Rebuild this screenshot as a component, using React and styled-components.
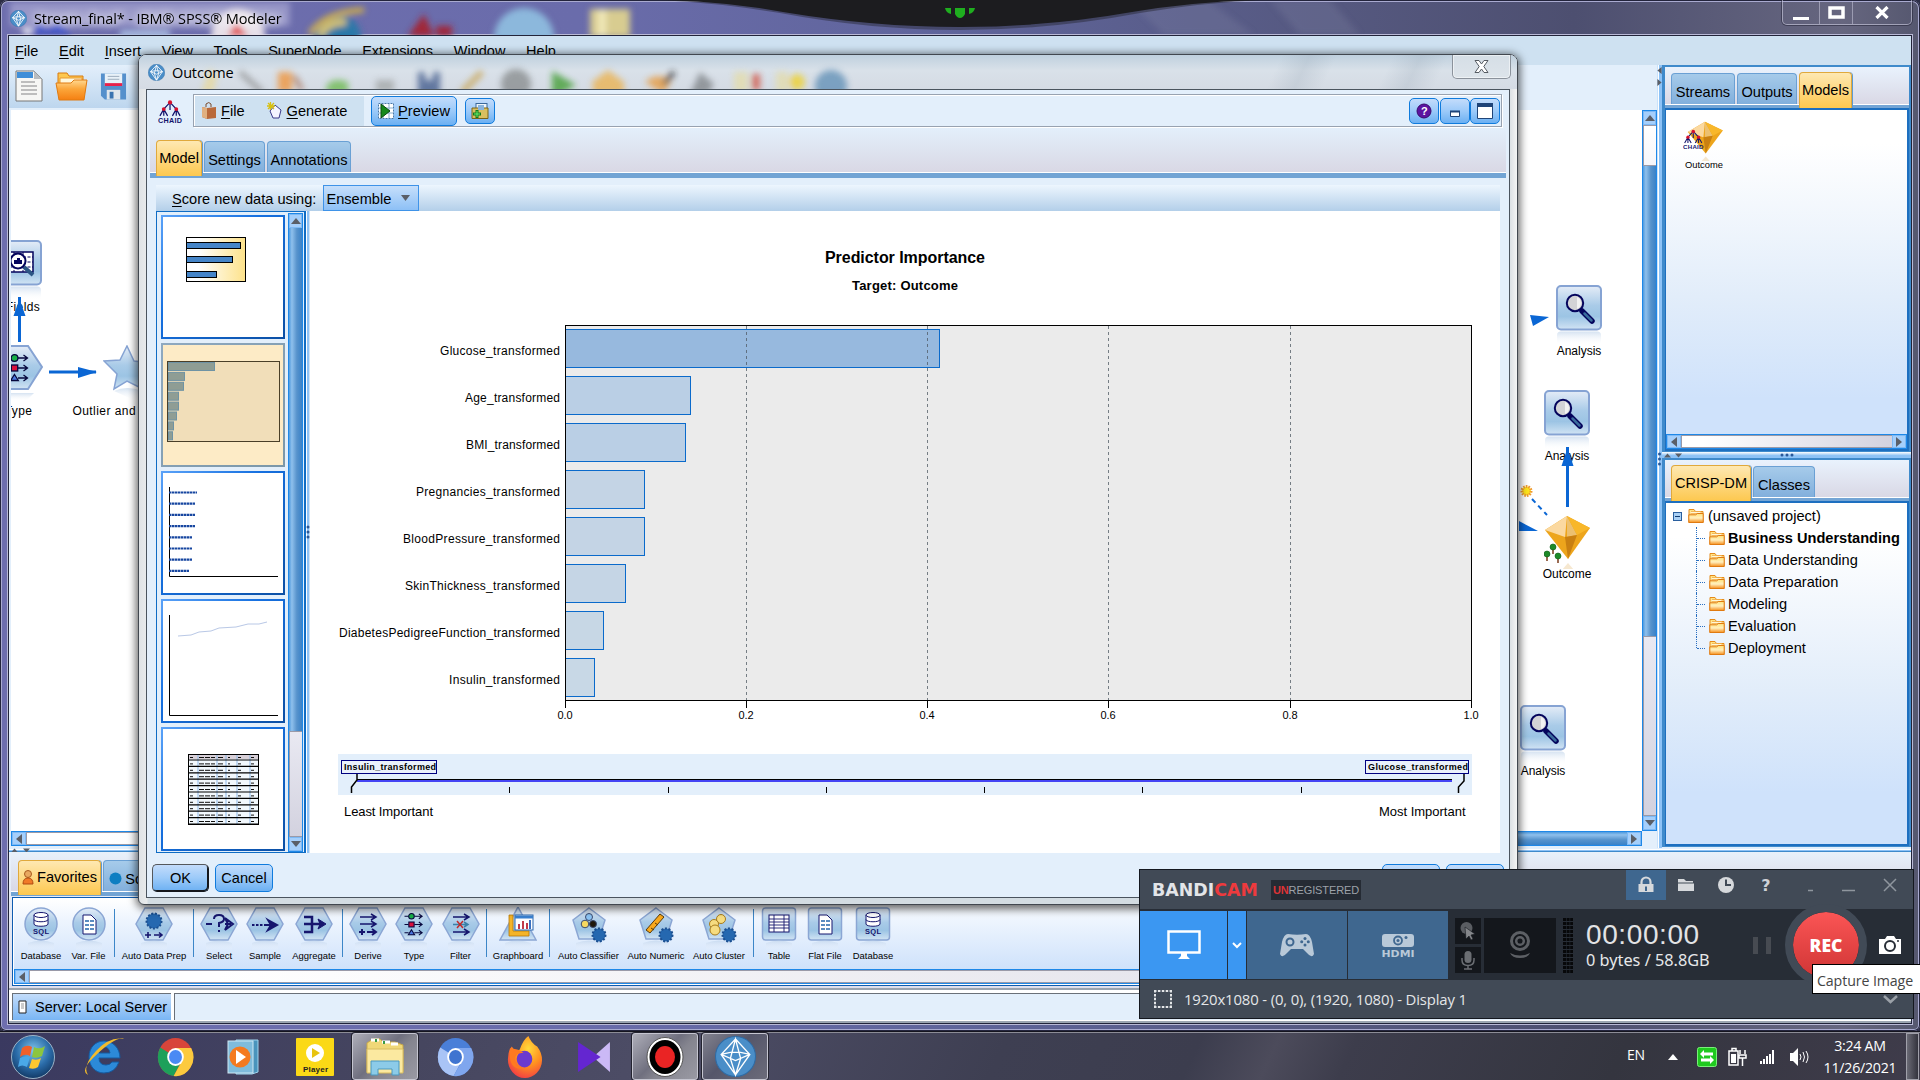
import React from "react";
import styled, { createGlobalStyle, css } from "styled-components";

const Global = createGlobalStyle`
  * { box-sizing: border-box; }
  body { margin: 0; overflow: hidden; background: #3b3c52; }
  svg { display: block; flex: none; }
`;

const ui = css`font-family: "Liberation Sans", Arial, sans-serif;`;
const segoe = css`font-family: "Open Sans", "Noto Sans", sans-serif;`;

const Desktop = styled.div`
  position: relative; width: 1920px; height: 1080px; overflow: hidden;
  display: flex; flex-direction: column; background: #2c2d45; color: #000;
  ${ui} font-size: 14.6px; white-space: nowrap;
`;

/* ---------- main window ---------- */
const MainWindow = styled.div`
  position: relative; isolation: isolate; height: 1031px; padding: 0 9px 8px; display: flex; flex-direction: column;
  border-radius: 8px 8px 6px 6px; box-shadow: inset 0 0 0 1px #23243c, inset 0 0 0 2px #a9aad0;
  background: linear-gradient(90deg, #6e6eae 0, #6a6cab 30%, #5f649a 50%, #55587f 70%, #4d4f70 82%, #66667f 96%, #55576f 100%);
`;
const TitleBar = styled.div`
  height: 36px; margin: 0 -9px; padding: 0 8px 0 10px; display: flex; align-items: flex-start; position: relative;
`;
const TitleArt = styled.svg`position: absolute; left: 0; top: 2px;`;
const TitleText = styled.div`
  position: relative; display: flex; align-items: center; gap: 7px; height: 36px; flex: 1;
  ${segoe} font-size: 14.5px; letter-spacing: -0.12px;
  span { text-shadow: 0 0 8px #fff, 0 0 12px rgba(255,255,255,.8), 0 0 16px rgba(255,255,255,.6); }
`;
const Caption = styled.div`
  position: relative; display: flex; height: 25px; width: 130px; padding-top: 1px; border: 1px solid rgba(200,200,220,.65); border-top: 0;
  border-radius: 0 0 5px 5px; box-shadow: 0 0 0 1px rgba(30,30,50,.5);
`;
const CaptionBtn = styled.div`
  width: ${p => p.$w}px; display: flex; align-items: center; justify-content: center;
  & + & { border-left: 1px solid rgba(200,200,220,.55); }
`;
const Client = styled.div`
  flex: 1; display: flex; flex-direction: column; background: #e3effb; box-shadow: 0 0 0 1px #22243a, 0 0 0 2px #b9b9d6; min-height: 0;
`;
const MenuBar = styled.div`
  height: 29px; background: #cee1f1; padding-left: 6px; display: flex; align-items: center; gap: 20.7px; font-size: 14.5px;
`;
const U = styled.span`text-decoration: underline; text-underline-offset: 2px;`;
const Body = styled.div`height: 783px; display: flex;`;
const StreamArea = styled.div`width: 1648px; display: flex; flex-direction: column;`;
const Toolbar = styled.div`
  height: 43px; display: flex; align-items: center; gap: 12px; padding: 0 0 1px 6px;
  background: linear-gradient(90deg, transparent 10%, #e3effb 60%), linear-gradient(#e3effb, #bdd6ee);
`;
const CanvasRow = styled.div`display: flex; height: 721px; margin: 2px 0 0 2px;`;
const Canvas = styled.div`position: relative; flex: 1; background: #fff; overflow: hidden;`;
const Links = styled.svg`position: absolute; left: 0; top: 0;`;
const Node = styled.div`
  position: absolute; left: ${p => p.$x - 61}px; top: ${p => p.$y - 110}px; width: 100px;
  display: flex; flex-direction: column; align-items: center; font-size: 12px; line-height: 14px;
`;
const NodeLabel = styled.div`margin-top: ${p => p.$m || -3}px; letter-spacing: ${p => p.$ls || 0}px; padding-left: ${p => p.$pl || 0}px;`;

const VBar = styled.div`width: 15px; display: flex; flex-direction: column; border: 1px solid #1e88e8; background: #fff;`;
const HBar = styled.div`height: ${p => p.$h || 15}px; display: flex; flex: none; border: 1px solid #1e88e8; background: #fff; margin: 0 ${p => p.$mr || 0}px 0 ${p => p.$ml || 0}px;`;
const Arrow = styled.div`
  width: ${p => (p.$h ? 14 : 13)}px; height: ${p => (p.$h ? "100%" : "14px")}; background: #a5cffb; flex: none;
  box-shadow: inset 0 0 0 1px #7db9f5; display: flex; align-items: center; justify-content: center;
`;
const Thumb = styled.div`
  flex: ${p => p.$f};
  background: linear-gradient(${p => (p.$h ? "180deg" : "90deg")}, #4f9ade, #8fc0ec 22%, #5793cc 60%, #3a82c8);
`;
const Track = styled.div`
  flex: ${p => p.$f}; border: 1px solid #9a9aa8; border-right: 0;
  background: linear-gradient(${p => (p.$white ? "180deg,#fff,#f6f6fa" : p.$v ? "180deg,#e9e9f2,#d3d2df" : "90deg,#fff 0,#fff 10%,#d3d2df")});
`;

const VSplit = styled.div`
  width: 5px; background: linear-gradient(90deg, #c9e2fb 0 1px, #fff 1px 2px, #8dc2f6 2px 5px);
  display: flex; flex-direction: column; align-items: center; padding-top: 2px;
`;
const Side = styled.div`width: 249px; display: flex; flex-direction: column;`;
const SidePanel = styled.div`
  height: ${p => p.$h}px; border: 3px solid #3f8acb; border-width: 2px 2px 1px 3px;
  background: #74a5d5; display: flex; flex-direction: column;
`;
const SideSplit = styled.div`height: 6px; background: linear-gradient(#fff, #8dc2f6 60%); display: flex; align-items: center; gap: 4px; padding-left: 2px;`;
const Strip = styled.div`
  height: ${p => p.$h}px; display: flex; align-items: flex-end; gap: 2px; padding-left: ${p => p.$pl}px; flex: none;
  background: linear-gradient(${p => p.$from || "#e9f2fd"}, #d9d8e5); border-bottom: 1px solid #fff;
`;
const Tab = styled.div`
  width: ${p => p.$w}px; height: ${p => p.$h || 31}px; flex: none; display: flex; align-items: center; justify-content: center; gap: 3px;
  padding-top: 5px; border: 1px solid #6aa0d4; border-bottom: 0; border-radius: 4px 4px 0 0;
  background: linear-gradient(#a6cbea, #82afdc); position: relative; z-index: 1;
  ${p => p.$on && css`background: linear-gradient(#fee8b2, #fdc84f); border-color: #e0a93c; margin-bottom: -4px; padding: 0 0 2px; box-shadow: 1px 0 0 #5c9bd4;`}
`;
const SideBody = styled.div`
  flex: 1; margin-top: 3px; border: 2px solid #1d6fc0; border-left-width: 1px; display: flex; flex-direction: column; min-height: 0;
  background: linear-gradient(#fff 10%, #e2edfa 55%, #cfe2fb 85%);
`;
const ModelItem = styled.div`
  flex: 1; padding: 11px 0 0 17px; display: flex; flex-direction: column; align-items: flex-start; font-size: 9.35px;
  div { width: 42px; text-align: center; margin-top: -1px; }
`;
const Tree = styled.div`flex: 1; padding-top: 2px; font-size: 14.6px;`;
const TreeRow = styled.div`
  height: 22px; display: flex; align-items: center; gap: ${p => (p.$root ? 4 : 3.5)}px; padding-left: ${p => (p.$root ? 7 : 30)}px;
  font-weight: ${p => (p.$bold ? 700 : 400)};
`;
const Guide = styled.div`width: 9px; height: 22px; border-left: 1px dotted #2a6fc0; display: flex; align-items: center; ${p => p.$last && "height: 11px; align-self: flex-start;"}
  &::after { content: ""; width: 9px; border-top: 1px dotted #2a6fc0; ${p => p.$last && "margin-top: 11px;"} }`;
const Expander = styled.div`
  width: 9px; height: 9px; margin-right: 2px; border: 1px solid #2a5f9e; background: #a9d0f5; display: flex; align-items: center; justify-content: center;
  &::after { content: ""; width: 5px; height: 1px; background: #103a70; }
`;

const HSplit = styled.div`height: 4px; background: linear-gradient(#e3f0fd 0 1px, #fff 1px 2px, #8dc2f6 2px 3px, #3f8acb 3px 4px); display: flex; gap: 5px; padding-left: 2px; align-items: center;`;
const Lower = styled.div`height: 136px; background: linear-gradient(#e8f1fb, #dedfec); padding-left: 2px; display: flex; flex-direction: column;`;
const BlueBar = styled.div`height: ${p => p.$h}px; background: #72a4d4; flex: none;`;
const Palette = styled.div`
  height: 89px; margin: 1px 3px 0 1px; border: 1px solid #0f5cb0; padding: 1px; background: #fff; display: flex; flex-direction: column;
`;
const PaletteItems = styled.div`flex: 1; min-height: 0; display: flex; padding: 8px 0 0 3px; background: linear-gradient(#fff, #eef5fe 30%, #cfe2fb);`;
const PaletteItem = styled.div`
  width: ${p => p.$w}px; flex: none; display: flex; flex-direction: column; align-items: center; font-size: 9.45px; line-height: 11px;
  div { margin-top: -2px; }
`;
const Sep = styled.div`width: 1px; height: 48px; margin: 2px 2px 0; background: #3c86c8; flex: none;`;
const StatusBar = styled.div`flex: 1; display: flex; gap: 3px; padding: 3px 0 1px 3px; border-top: 2px solid #9aa4b0; border-bottom: 2px solid #9aa4b0; background: #fff;`;
const ServerBtn = styled.div`
  width: 159px; display: flex; align-items: center; gap: 8px; padding-left: 5px; border: 1px solid #6a7078; border-width: 1px 0 0 1px;
  background: linear-gradient(#c3dcfa, #79b5f4); font-size: 14.5px;
`;
const StatusRest = styled.div`flex: 1; background: #e3effb; border: 1px solid #6a7078; border-width: 1px 0 0 1px;`;

const TopTab = styled.svg`position: absolute; left: 660px; top: 0;`;

/* ---------- dialog ---------- */
const Dialog = styled.div`
  position: absolute; left: 138px; top: 54px; width: 1380px; height: 851px; border: 1px solid #41474f; border-radius: 8px 8px 6px 6px;
  padding: 0 7px 6px; display: flex; flex-direction: column; overflow: hidden;
  background: linear-gradient(90deg, #dfe3e6, #e9ebec 8px, transparent 9px, transparent calc(100% - 9px), #dfe3e6 calc(100% - 6px), #f4f4f4), #d3dce2;
`;
const DialogShadow = styled.div`
  position: absolute; left: 138px; top: 54px; width: 1380px; height: 851px; border-radius: 8px; box-shadow: 0 2px 9px 2px rgba(0,0,0,.6);
`;
const DlgTitle = styled.div`
  position: relative; height: 34px; margin: 0 -7px; padding: 0 6px 0 9px; display: flex; align-items: flex-start; flex: none;
  background: linear-gradient(115deg, transparent 82%, rgba(150,165,180,.25) 84%, transparent 86%, transparent 90%, rgba(150,165,180,.25) 92%, transparent 94%), linear-gradient(#bfd0de, #d9e1e9 45%, #d5dbe4);
`;
const DlgArt = styled.svg`position: absolute; left: 0; top: 0;`;
const DlgName = styled.div`position: relative; flex: 1; height: 34px; display: flex; align-items: center; gap: 7px; ${segoe} font-size: 14.5px; letter-spacing: -0.15px;`;
const DlgClose = styled.div`
  position: relative; width: 59px; height: 24px; border: 1px solid #8b929b; border-top: 0; border-radius: 0 0 5px 5px;
  background: linear-gradient(#d5dee6, #dde4ea); box-shadow: inset 0 0 0 1px rgba(255,255,255,.5); display: flex; align-items: center; justify-content: center;
`;
const DlgBody = styled.div`flex: 1; min-height: 0; border: 1px solid #4a545e; background: #e3effb; display: flex; flex-direction: column;`;
const DlgTools = styled.div`height: 38px; display: flex; align-items: flex-start; padding: 4px 7px 0 11px; gap: 10px; flex: none; & > svg { margin-top: 5px; }`;
const ToolFrame = styled.div`
  flex: 1; height: 33px; border: 1px solid #98a2b0; box-shadow: inset 1px 1px 0 #fff, 1px 1px 0 #fff; display: flex; align-items: center; padding: 1px 1px 0;
`;
const DlgMenu = styled.div`width: 169px; height: 30px; background: #cee1f1; display: flex; align-items: center; padding-left: 6px; gap: 4px; font-size: 14.6px; margin-right: 7px;`;
const Gap = styled.div`width: ${p => p.$w}px; flex: ${p => (p.$w ? "none" : 1)};`;
const Btn = styled.div`
  width: ${p => p.$w}px; height: ${p => p.$h}px; border: 1px solid ${p => (p.$dark ? "#14171c" : "#0f7bdd")}; border-radius: 5px; flex: none;
  display: flex; align-items: center; justify-content: center; gap: 4px; background: linear-gradient(#c3dcfb, #9ccaf9 50%, #6cb0f2);
  ${p => p.$dark && css`box-shadow: inset -1px -1px 0 #14171c; border-color: #55585c #14171c #14171c #55585c;`}
`;
const DlgTabs = styled.div`margin: 0 3px;`;
const ScoreBar = styled.div`
  height: 26px; margin: 7px 9px 0 9px; padding-left: 16px; display: flex; align-items: center; background: linear-gradient(#edf6fe, #b3cfe9); flex: none;
  span { padding-top: 1px; }
`;
const Select = styled.div`
  margin-left: 7px; width: 96px; height: 26px; border: 1px solid #3f93e8; background: linear-gradient(#c6dffb, #8dc0f6); display: flex; align-items: center; justify-content: space-between; padding: 0 8px 0 2px;
`;
const Work = styled.div`height: 642px; margin: 0 9px; display: flex; flex: none;`;
const ThumbPane = styled.div`width: 150px; border: 1px solid #0f6cc4; border-right-width: 2px; display: flex; justify-content: space-between; padding: 1px 1px 0 4px;`;
const ThumbList = styled.div`display: flex; flex-direction: column; gap: 4px; padding-top: 2px;`;
const ThumbCard = styled.div`
  width: 124px; height: 124px; padding: 2px; background: ${p => (p.$on ? "linear-gradient(135deg,#8fa9c0,#7b97a8)" : "linear-gradient(135deg,#5aa2f8,#1670e0 40%,#0b4fa4)")};
  svg { background: ${p => (p.$on ? "#fdebc6" : "#fff")}; }
`;
const PaneSplit = styled.div`width: 4px; background: linear-gradient(90deg, #fff 0 1px, #8dc2f6 1px 3px, #cfe2f6 3px); display: flex; flex-direction: column; justify-content: center;`;
const ChartArea = styled.div`flex: 1; background: #fff;`;
const DlgFooter = styled.div`flex: 1; display: flex; gap: 6px; padding: 11px 5px 0 5px;`;

/* ---------- recorder ---------- */
const Recorder = styled.div`
  position: absolute; left: 1139px; top: 869px; width: 775px; height: 150px; border: 1px solid #14181f; background: #414a56;
  display: flex; flex-direction: column; color: #e6e8ea;
`;
const RecHead = styled.div`height: 40px; flex: none; display: flex; align-items: flex-start; border-bottom: 1px solid #272d36; padding-left: 12px;`;
const Brand = styled.div`
  width: 119px; height: 40px; font: 700 17.4px/41px "DejaVu Sans", sans-serif; color: #e3e5e8;
  span { color: #ee3a3d; }
`;
const Unreg = styled.div`margin-top: 10px; width: 90px; height: 20px; background: #252b34; color: #9da2a9; font-size: 11px; line-height: 20px; text-align: center; letter-spacing: -0.1px;
  span { color: #dd3336; font-weight: 700; }`;
const HeadBtn = styled.div`width: 40px; height: 30px; display: flex; align-items: center; justify-content: center; background: ${p => (p.$on ? "#3f678f" : "none")}; font: 700 16px "DejaVu Sans", sans-serif; color: #cfd2d6;`;
const RecRow = styled.div`height: 70px; flex: none; background: #272d36; display: flex; align-items: center;`;
const Mode = styled.div`width: ${p => p.$w}px; height: 68px; margin-right: 1px; background: ${p => (p.$on ? "#3b97f2" : "#3f678f")}; display: flex; flex-direction: column; align-items: center; justify-content: center;`;
const SmallCol = styled.div`display: flex; flex-direction: column; gap: 3px; margin: 0 3px 0 6px;`;
const DarkBox = styled.div`width: ${p => p.$w}px; height: ${p => p.$h}px; background: #14171c; display: flex; align-items: center; justify-content: center;`;
const Timer = styled.div`width: 126px; margin-left: 13px; display: flex; flex-direction: column;`;
const Clock = styled.div`font: 400 28px/28px "Liberation Sans", sans-serif; letter-spacing: 0.6px; color: #e2e3e5;`;
const Bytes = styled.div`font-family: "Noto Sans", sans-serif; font-size: 16.3px; line-height: 20px; margin-top: 1px;`;
const RecBtn = styled.div`
  width: 82px; height: 82px; border: 8px solid #414a56; border-radius: 50%; background: linear-gradient(#fb5555, #cf3535); background-clip: padding-box;
  display: flex; align-items: center; justify-content: center; color: #fff; font: 800 17.5px "Open Sans", sans-serif; flex: none;
`;
const RecFoot = styled.div`flex: 1; display: flex; align-items: center; padding: 0 15px 0 14px; ${segoe} font-size: 14.9px; color: #e4e6e8; letter-spacing: -0.15px;`;
const Marquee = styled.svg`margin-right: 12px;`;
const Tip = styled.div`
  position: absolute; left: 1812px; top: 964px; width: 110px; height: 30px; border: 1px solid #000; background: #fff; color: #444;
  ${segoe} font-size: 14.2px; line-height: 31px; padding-left: 4px; letter-spacing: -0.1px;
`;

/* ---------- taskbar ---------- */
const Taskbar = styled.div`
  height: 49px; display: flex; align-items: stretch; border-top: 1px solid #15151f; box-shadow: inset 0 1px 0 #8c8c96; padding-top: 1px;
  background: linear-gradient(115deg, #3a3960 0, #46465f 22%, #4d4d66 35%, #3e3f52 52%, #3c3d4e 62%, #4c4b5b 66%, #3d3d4c 70%, #34353f 84%, #3f3c4b 100%);
`;
const Task = styled.div`
  width: ${p => p.$w || 70}px; display: flex; align-items: center; justify-content: center;
  ${p => p.$on && css`width: 66px; margin: 0 2px; border: 1px solid #c5c5d0; border-radius: 3px; background: linear-gradient(135deg, #aeaeb9, #70707f 45%, #85858f 60%, #9a9aa4); box-shadow: 0 0 0 1px #23232f;`}
  ${p => p.$dim && css`background: linear-gradient(135deg, #82828f, #55566a 45%, #6c6c7a);`}
`;
const Tray = styled.div`margin-left: auto; display: flex; align-items: center; color: #fff;`;
const Lang = styled.div`${segoe} font-size: 14px; width: 19px; padding-bottom: 4px; letter-spacing: -0.3px;`;
const DateBox = styled.div`width: 92px; text-align: center; ${segoe} line-height: 22px; font-size: 14.2px; letter-spacing: -0.25px;`;
const ShowDesk = styled.div`width: 13px; height: 47px; margin: 0 1px 0 0; border: 1px solid #a0a0aa; background: linear-gradient(90deg, #6a6a75, #33333d);`;

/* ---------- drawings ---------- */
const Defs = styled.svg`position: absolute; width: 0; height: 0;`;
const SharedDefs = () => (
  <Defs>
    <defs>
      <linearGradient id="node" x1="0" y1="0" x2="0" y2="1"><stop offset="0" stopColor="#e4ecf7" /><stop offset=".45" stopColor="#a9cbe8" /><stop offset=".7" stopColor="#9cc4e4" /><stop offset="1" stopColor="#d2e4f4" /></linearGradient>
      <linearGradient id="refl" x1="0" y1="0" x2="0" y2="1"><stop offset="0" stopColor="#b9cfe8" stopOpacity=".6" /><stop offset="1" stopColor="#fff" stopOpacity="0" /></linearGradient>
      <linearGradient id="fold" x1="0" y1="0" x2="0" y2="1"><stop offset="0" stopColor="#ffe27a" /><stop offset=".5" stopColor="#fff0c0" /><stop offset="1" stopColor="#f68f1c" /></linearGradient>
      <linearGradient id="foldFront" x1="0" y1="0" x2="0" y2="1"><stop offset="0" stopColor="#ffd890" /><stop offset=".45" stopColor="#fba63a" /><stop offset="1" stopColor="#f57f12" /></linearGradient>
      <linearGradient id="cream" x1="0" y1="0" x2="1" y2="0"><stop offset=".2" stopColor="#fff" /><stop offset="1" stopColor="#fde28a" /></linearGradient>
      <radialGradient id="orb" cx=".5" cy=".35" r=".65"><stop offset="0" stopColor="#7fc4ea" /><stop offset=".6" stopColor="#2a6ba8" /><stop offset="1" stopColor="#123a66" /></radialGradient>
      <radialGradient id="fox" cx=".6" cy=".3" r=".8"><stop offset="0" stopColor="#ffd93b" /><stop offset=".5" stopColor="#ff9020" /><stop offset="1" stopColor="#f0304a" /></radialGradient>
      <filter id="soft" x="-30%" y="-30%" width="160%" height="160%"><feGaussianBlur stdDeviation="3" /></filter>
    </defs>
  </Defs>
);

const Diamond = ({ s = 17 }) => (
  <svg width={s} height={s} viewBox="0 0 40 40"><circle cx="20" cy="20" r="19.5" fill="#4a8ec8" stroke="#2e6ba5" /><path d="M20 3 34 18 20 38 6 18ZM6 18 20 24 34 18M20 3 15 22 20 38 25 22ZM6 18 15 16 25 16 34 18" fill="none" stroke="#fff" strokeWidth={s > 25 ? 1.3 : 2} /></svg>
);
const Tri = ({ d, s = 10 }) => {
  const p = { up: "0,8 5,2 10,8", down: "0,2 5,8 10,2", left: "8,0 2,5 8,10", right: "2,0 8,5 2,10" }[d];
  return <svg width={s} height={s} viewBox="0 0 10 10"><polygon points={p} fill="#5a5f68" /></svg>;
};
const Folder = ({ w = 16, h = 16 }) => (
  <svg width={w} height={h} viewBox="0 0 16 16"><path d="M1 1.500h5l1.500 2H15v11H1Z" fill="url(#fold)" stroke="#e58a1a" /><path d="M3 3.500h10v2H2.500" fill="#fff7d8" stroke="#efa030" strokeWidth=".7" /><path d="M.8 6.800h7l1.400-1.300h6v9H.8Z" fill="url(#fold)" stroke="#e07a10" /></svg>
);
const Lens = () => (
  <g><path d="m26 26 10 10" stroke="#04045c" strokeWidth="5.5" strokeLinecap="round" /><path d="m28.500 28.500 7 7" stroke="#3a6c9c" strokeWidth="2.500" strokeLinecap="round" /><circle cx="19" cy="18" r="8.200" fill="#d3d3d6" stroke="#04045c" strokeWidth="2" /><path d="M21 12a6.500 6.500 0 0 1 0 12" fill="#f2f2f2" /></g>
);
const AnalysisIcon = () => (
  <svg width="46" height="62" viewBox="0 0 46 62"><rect x="1" y="1" width="44" height="43.500" rx="4" fill="url(#node)" stroke="#86a3d3" strokeWidth="2" /><path d="M1 60V50q0-3.500 4-3.500h36q4 0 4 3.500v10Z" fill="url(#refl)" /><Lens /></svg>
);
const FieldsIcon = () => (
  <svg width="46" height="62" viewBox="0 0 46 62"><rect x="1" y="1" width="44" height="43.500" rx="4" fill="url(#node)" stroke="#86a3d3" strokeWidth="2" /><path d="M1 60V50q0-3.500 4-3.500h36q4 0 4 3.500v10Z" fill="url(#refl)" /><rect x="9" y="12" width="28" height="20" fill="#fff" stroke="#04045c" strokeWidth="1.500" /><path d="M18 12v20M27 12v20M9 17h28M9 22h28M9 27h28" stroke="#04045c" strokeDasharray="3 1.500" /><circle cx="22" cy="21" r="7.500" fill="#fff" stroke="#04045c" strokeWidth="2" /><path d="M18 24h8v-4h-2v-2h-3v2h-3Z" fill="#04045c" /><path d="m28 27 9 8" stroke="#2c5684" strokeWidth="4" /></svg>
);
const TypeArrows = ({ x, y, s = 1 }) => (
  <g transform={`translate(${x} ${y}) scale(${s})`} stroke="#06063c" strokeWidth="1.300" fill="none"><path d="M0 4h5M12 4h9M17.500 1l4 3-4 3M0 14h5M12 14h9M17.500 11l4 3-4 3M0 24h5M12 24h9M17.500 21l4 3-4 3" /><circle cx="8.500" cy="4" r="3.400" fill="#18b048" /><rect x="5.300" y="11" width="6.400" height="6" fill="#d8103c" /><path d="m8.500 20.500 3.800 6H4.700Z" fill="#4a78e0" /></g>
);
const TypeIcon = () => (
  <svg width="60" height="58" viewBox="0 0 60 58"><path d="M14 1h30l14 21-14 22H14L2 22Z" fill="url(#node)" stroke="#86a3d3" strokeWidth="2" /><path d="M6 48h44l-8 8H14Z" fill="url(#refl)" /><TypeArrows x={22} y={9} /></svg>
);
const StarIcon = () => (
  <svg width="50" height="58" viewBox="0 0 50 58"><path d="m24 1 7 15 18 2-13 11 4 15-16-8-13 8 3-15L1 16l16-1Z" fill="url(#node)" stroke="#86a3d3" strokeWidth="1.500" /><path d="M11 46q13-6 28 0l-6 10Z" fill="url(#refl)" /></svg>
);
const Gem = () => (
  <g><path d="M23 1 46 13 24 44 1 15Z" fill="#eda51c" /><path d="M23 1 1 15l20 7Z" fill="#fbd9a0" /><path d="M23 1v21l10-2Z" fill="#ecc070" /><path d="m23 1 23 12-13 7Z" fill="#f8b72a" /><path d="m21 22 12-2-9 24Z" fill="#c98012" /><path d="m24 48 6 7H18Z" fill="#f0d8b0" opacity=".6" /></g>
);
const GemIcon = () => (
  <svg width="46" height="54" viewBox="0 0 46 54"><Gem />{[[9, 30], [3, 37], [14, 39]].map(([x, y], i) => <g key={i}><path d={`M${x} ${y}v9`} stroke="#7a3a18" strokeWidth="1.500" /><circle cx={x} cy={y + 2} r="3" fill="#1d8a28" stroke="#0c5a14" strokeWidth=".6" /></g>)}</svg>
);
const ChaidArt = () => (
  <g fill="none" stroke="#14146c" strokeWidth="1.300"><path d="M12.500 3 6 10 2 17M6 10v7M6 10l4 7M12.500 3 19 10l-4 7M19 10v7M19 10l4 7M12.500 3v8" /><g fill="#d8102c" stroke="none"><circle cx="12.500" cy="3" r="2.200" /><circle cx="6" cy="10" r="2" /><circle cx="19" cy="10" r="2" /></g><text x="0" y="24.500" fontSize="7.500" fontWeight="700" fill="#14146c" stroke="none" textLength="25" fontFamily="Liberation Sans">CHAID</text></g>
);

const P = { circle: <circle cx="19" cy="17" r="16" />, hex: <path d="M10 1h18l9 16-9 16H10L1 17Z" />, penta: <path d="m19 1 16 12-6 19H9L3 13Z" />, square: <rect x="2.500" y="1" width="33" height="32" rx="3" />, tri: <path d="m19 0 18 33H1Z" /> };
const PalIcon = ({ shape, children }) => (
  <svg width="38" height="45" viewBox="0 0 38 45"><g fill="url(#node)" stroke="#8ba6d4" strokeWidth="1.500">{P[shape]}</g><path d="M6 36q13-5 26 0v8H6Z" fill="url(#refl)" />{children}</svg>
);
const ink = "#16166e";
const Db = () => <g fill="#fff" stroke={ink}><path d="M12 8v9c0 3 14 3 14 0V8" /><ellipse cx="19" cy="8" rx="7" ry="2.500" /><path d="M12 12.500c0 3 14 3 14 0" fill="none" /><text x="11" y="27" fontSize="7.500" fontWeight="700" fill={ink} stroke="none" textLength="16" fontFamily="Liberation Sans">SQL</text></g>;
const Doc = () => <g><path d="M13 8h8l5 5v14H13Z" fill="#fff" stroke={ink} /><path d="M15 14h4M20 14h4M15 18h4M20 18h4M15 22h4M20 22h4" stroke="#5a8cc0" strokeWidth="2" /></g>;
const Gear = ({ x, y, r = 7 }) => <g><circle cx={x} cy={y} r={r} fill="#2568b0" stroke="#1c4f90" strokeWidth="2" strokeDasharray="2 1.600" /></g>;
const ar = (y, x = 11) => `M${x} ${y}h15M${x + 11} ${y - 3}l5 3-5 3`;
const palette = [
  [48, "Database", "circle", <Db />], [47, "Var. File", "circle", <Doc />], 0,
  [74, "Auto Data Prep", "hex", <g><Gear x={19} y={14} r={7.500} /><path d="M10 28h6M13 25v6M19 28h8M24 25.500l3 2.500-3 2.500" stroke={ink} strokeWidth="1.600" fill="none" /></g>], 0,
  [46, "Select", "hex", <g stroke={ink} strokeWidth="2" fill="none"><path d="M6 17h6M25 17h6M25 11l8 6-8 6 3-6Z" /><path d="M14 12q0-4 5-4t5 4q0 3-5 4v4" /><path d="M18 24h2" /></g>],
  [46, "Sample", "hex", <g stroke={ink} strokeWidth="2" fill={ink}><path d="M6 18h14" strokeDasharray="2.500 1.500" /><path d="M20 18h8M22 13l9 5-9 5 3-5Z" /></g>],
  [52, "Aggregate", "hex", <g stroke={ink} strokeWidth="2.500" fill="none"><path d="M9 10h8v15H9M9 17h17" /><path d="m23 12 8 5-8 5 2-5Z" fill={ink} strokeWidth="1" /></g>], 0,
  [46, "Derive", "hex", <g stroke={ink} strokeWidth="1.500" fill="none"><path d={ar(10) + ar(17)} /><path d="M10 25h6M13 22v6M18 25h8M23 22l4 3-4 3" strokeWidth="2" /></g>],
  [46, "Type", "hex", <TypeArrows x={9.500} y={6} s={0.82} />],
  [47, "Filter", "hex", <g stroke={ink} strokeWidth="1.500" fill="none"><path d={ar(10)} /><path d={ar(25)} /><path d="M11 17.500h14M22 15l4 2.500-4 2.500" stroke="#3a80a8" /><path d="m15 14 6 7M21 14l-6 7" stroke="#c02a2a" /></g>], 0,
  [58, "Graphboard", "tri", <g><path d="M10 8h4v16h16v5H10Z" fill="#f4b428" stroke="#b87808" strokeWidth=".8" /><rect x="16" y="8" width="18" height="15" fill="#fff" stroke="#2a68b0" /><path d="M16 10h18" stroke="#3a80d0" strokeWidth="3" /><path d="M20 22v-5M24 22v-8M28 22v-6" stroke="#c03a4a" strokeWidth="2" /><path d="M31 22v-9" stroke="#3a70c0" strokeWidth="2" /></g>], 0,
  [73, "Auto Classifier", "penta", <g stroke="#3a4a70"><circle cx="19" cy="10" r="3.500" fill="#8cc4f4" /><circle cx="15" cy="17" r="3.800" fill="#f6d860" /><circle cx="23" cy="17" r="3.500" fill="#20180c" /><Gear x={29} y={28} r={6.500} /></g>],
  [62, "Auto Numeric", "penta", <g><path d="m9 23 14-16 4 3-14 16Z" fill="#f8a81c" stroke="#5a3a08" /><path d="m14 21 3 2M18 16l3 2" stroke="#5a3a08" /><Gear x={29} y={28} r={6.500} /></g>],
  [64, "Auto Cluster", "penta", <g fill="#f6dc80" stroke="#a87c1c"><circle cx="21" cy="12" r="4.500" /><circle cx="14" cy="17" r="4.500" /><circle cx="15" cy="23" r="5" /><Gear x={29} y={28} r={6.500} /></g>], 0,
  [46, "Table", "square", <g><rect x="9" y="8" width="20" height="17" fill="#fff" stroke={ink} /><path d="M9 12h20M9 15h20M9 18h20M9 21h20M14 8v17M24 8v17" stroke={ink} strokeWidth=".9" /></g>],
  [46, "Flat File", "square", <Doc />], [50, "Database", "square", <Db />],
];

const rows = [
  ["Glucose_transformed", 939.5, "#97b9de", 440], ["Age_transformed", 690.5, "#bacfe5", 465], ["BMI_transformed", 685.5, "#bacfe5", 466],
  ["Pregnancies_transformed", 644.5, "#c4d4e5", 416], ["BloodPressure_transformed", 644.5, "#c4d4e5", 403], ["SkinThickness_transformed", 625.5, "#c5d5e5", 405],
  ["DiabetesPedigreeFunction_transformed", 603.5, "#c7d7e5", 339], ["Insulin_transformed", 594.5, "#c8d8e6", 449],
];
const ticks = [[565, "0.0"], [746, "0.2"], [927, "0.4"], [1108, "0.6"], [1290, "0.8"], [1471, "1.0"]];

const Chart = () => (
  <svg width="1190" height="642" viewBox="310 211 1190 642" fontFamily="Liberation Sans, Arial, sans-serif" fill="#000">
    <text x="825" y="263" fontSize="16" fontWeight="700" textLength="160">Predictor Importance</text>
    <text x="852" y="290" fontSize="13" fontWeight="700" textLength="106">Target: Outcome</text>
    <rect x="565.500" y="325.500" width="906" height="375" fill="#ebebeb" stroke="#000" />
    {rows.map(([n, x, c], i) => <rect key={n} x="565.500" y={329.500 + 47 * i} width={x - 565.500} height="38" fill={c} stroke="#0a6acb" />)}
    {ticks.slice(1, 5).map(([x]) => <path key={x} d={`M${x + .5} 326V700`} stroke="#4d5862" strokeOpacity=".75" strokeDasharray="3 3" />)}
    <path d="M565.500 325V701" stroke="#000" />
    {ticks.map(([x, t]) => <g key={t}><path d={`M${x + .5} 701v7`} stroke="#000" /><text x={x - 7.500} y="718.500" fontSize="11" textLength="15">{t}</text></g>)}
    {rows.map(([n, , , l], i) => <text key={n} x={l} y={355 + 47 * i} fontSize="12" textLength={560 - l}>{n}</text>)}
    <rect x="338" y="754" width="1134" height="41" fill="#e3effb" />
    <path d="M357 779.500H1452" stroke="#000" /><path d="M357 781H1452" stroke="#4444f4" strokeWidth="2" />
    <path d="M357 774v6l-5.500 7v6M1464 774v7l-5.500 6v6" stroke="#000" fill="none" strokeWidth="1.500" />
    {[509.5, 668.5, 826.5, 984.5, 1142.5, 1301.5].map(x => <path key={x} d={`M${x} 787v6`} stroke="#000" />)}
    <rect x="341.500" y="760.500" width="95" height="13" fill="#eaf1fb" stroke="#000080" /><text x="344" y="770" fontSize="9" fontWeight="700" textLength="92">Insulin_transformed</text>
    <rect x="1365.500" y="760.500" width="103" height="13" fill="#eaf1fb" stroke="#000080" /><text x="1368" y="770" fontSize="9" fontWeight="700" textLength="100">Glucose_transformed</text>
    <text x="344" y="816" fontSize="13" textLength="89">Least Important</text>
    <text x="1379" y="816" fontSize="13" textLength="86.500">Most Important</text>
  </svg>
);

/* overview cards share one coordinate space: 120 × 120 */
const cards = [
  <svg width="120" height="120"><rect x="23.500" y="20.500" width="59" height="44" fill="url(#cream)" stroke="#000" />{[[25.5, 54], [39.5, 46], [54.5, 30]].map(([y, w]) => <rect key={y} x="23.500" y={y} width={w} height="6" fill="#4585c8" stroke="#000" />)}</svg>,
  <svg width="120" height="120"><rect x="4.500" y="16.500" width="112" height="80" fill="#f1deb9" stroke="#4a3f28" />{[46, 16, 15, 10, 10, 8, 5, 4].map((w, i) => <rect key={i} x="5.500" y={17.500 + 9.900 * i} width={w} height="8" fill="#8f9d94" stroke="#6f93a4" />)}</svg>,
  <svg width="120" height="120"><path d="M6.500 14V103.500H115" stroke="#000" fill="none" />{[28, 26, 26, 26, 23, 23, 23, 20].map((w, i) => <path key={i} d={`M6 ${19.500 + 11.200 * i}h${w}`} stroke="#1746a0" strokeWidth="2.200" strokeDasharray="2.500 .5" />)}</svg>,
  <svg width="120" height="120"><path d="M6.500 14V114.500H115" stroke="#000" fill="none" /><path d="m15 35 13-1 8-3 12-1 8-3 17-1 12-3 11 0 8-2" stroke="#b9c8e6" fill="none" /></svg>,
  <svg width="120" height="120"><rect x="25.500" y="25.500" width="70" height="70" fill="#f2f8fd" stroke="#000" /><rect x="26" y="26" width="69" height="4" fill="#d8d0d8" /><path d="M35 26v69M54 26v69M63 26v69M74 26v69M87 26v69" stroke="#8fb8e6" />{Array.from({ length: 11 }, (_, i) => <g key={i}><path d={`M25 ${31 + 6.400 * i}h71`} stroke="#000" strokeWidth="1.200" /><path d={`M27 ${28.500 + 6.400 * i}h3M36 ${28.500 + 6.400 * i}h16M55 ${28.500 + 6.400 * i}h5M65 ${28.500 + 6.400 * i}h2M75 ${28.500 + 6.400 * i}h3M88 ${28.500 + 6.400 * i}h3`} stroke="#111" strokeDasharray="5 1" /></g>)}</svg>,
];

const HeadIcon = ({ children }) => <svg width="18" height="18" viewBox="0 0 18 18" fill="#d6d9dc">{children}</svg>;

const RecorderPanel = () => (
  <Recorder>
    <RecHead>
      <Brand>BANDI<span>CAM</span></Brand>
      <Unreg><span>UN</span>REGISTERED</Unreg>
      <Gap />
      <HeadBtn $on><HeadIcon><path d="M1.500 8h15v8h-15Z" /><path d="M4.500 9V6a4.500 4.500 0 0 1 9 0v3" fill="none" stroke="#d6d9dc" strokeWidth="2.200" /><path d="M8 10.500h2V15H8Z" fill="#3f678f" /></HeadIcon></HeadBtn>
      <HeadBtn><HeadIcon><path d="M1 3h6l2 2h7v1.500H1ZM1 7.500h16V15H1Z" /></HeadIcon></HeadBtn>
      <HeadBtn><HeadIcon><circle cx="9" cy="9" r="8" /><path d="M9 3.500V9h5" fill="none" stroke="#414a56" strokeWidth="2" /></HeadIcon></HeadBtn>
      <HeadBtn>?</HeadBtn>
      <Gap $w={21} />
      <svg width="106" height="39" viewBox="0 0 106 39" stroke="#8f969e" fill="none" strokeWidth="1.500"><path d="M1 20.500h5M35 20.500h13M77 9l12 12M89 9 77 21" /></svg>
    </RecHead>
    <RecRow>
      <Mode $w={87} $on><svg width="34" height="30" viewBox="0 0 34 30"><path d="M1.500 1.500h31v21h-31Z" fill="none" stroke="#fff" strokeWidth="2.500" /><path d="M14 23h6v3l3 3H11l3-3Z" fill="#fff" /></svg></Mode>
      <Mode $w={18} $on><svg width="10" height="7"><path d="m1 1 4 4 4-4" fill="none" stroke="#fff" strokeWidth="2" /></svg></Mode>
      <Mode $w={100}><svg width="34" height="24" viewBox="0 0 34 24"><path d="M8 1q9 1.500 18 0 4 0 6 8l2 12q-2 5-7-1l-4-4H11l-4 4q-5 6-7 1L2 9Q4 1 8 1Z" fill="#b9c9d8" /><circle cx="10" cy="9" r="3.500" fill="none" stroke="#3f678f" strokeWidth="2" /><g fill="#3f678f"><circle cx="25" cy="5.500" r="1.500" /><circle cx="25" cy="12" r="1.500" /><circle cx="21.700" cy="8.800" r="1.500" /><circle cx="28.300" cy="8.800" r="1.500" /></g></svg></Mode>
      <Mode $w={100}><svg width="34" height="25" viewBox="0 0 34 25"><rect x="1" y="1" width="32" height="13" rx="3" fill="#b9c9d8" /><circle cx="17" cy="7.500" r="4" fill="none" stroke="#3f678f" strokeWidth="1.800" /><circle cx="17" cy="7.500" r="1.500" fill="#3f678f" /><circle cx="25" cy="4.500" r="1.500" fill="#3f678f" /><text x=".5" y="24" fontFamily="DejaVu Sans" fontWeight="700" fontSize="9.500" fill="#b9c9d8" textLength="33" lengthAdjust="spacingAndGlyphs">HDMI</text></svg></Mode>
      <SmallCol>
        <DarkBox $w={26} $h={26}><svg width="18" height="20" viewBox="0 0 18 20"><circle cx="7.500" cy="7" r="6" fill="#5a5d62" /><path d="m6 6 10 7-4 1 2 4-2 1-2-4-3 3Z" fill="#85878b" stroke="#14171c" strokeWidth=".6" /></svg></DarkBox>
        <DarkBox $w={26} $h={26}><svg width="16" height="20" viewBox="0 0 16 20"><rect x="4.500" y="1" width="7" height="12" rx="3.500" fill="#6b6e73" /><path d="M2 8v2q0 5.500 6 5.500t6-5.500V8M8 16v3M4 19h8" stroke="#6b6e73" strokeWidth="1.500" fill="none" /></svg></DarkBox>
      </SmallCol>
      <DarkBox $w={72} $h={55}><svg width="24" height="30" viewBox="0 0 24 30"><circle cx="12" cy="11" r="8.500" fill="none" stroke="#5d6065" strokeWidth="3" /><circle cx="12" cy="11" r="3.800" fill="none" stroke="#5d6065" strokeWidth="2.500" /><path d="M2 23q10 5 20 0-2 5-10 5T2 23Z" fill="#5d6065" /></svg></DarkBox>
      <Gap $w={7} />
      <svg width="10" height="55">{Array.from({ length: 14 }, (_, i) => <path key={i} d={`M0 ${1.5 + i * 4}h10`} stroke="#07080a" strokeWidth="3" strokeDasharray="3 .6" />)}</svg>
      <Timer><Clock>00:00:00</Clock><Bytes>0 bytes / 58.8GB</Bytes></Timer>
      <Gap $w={41} />
      <svg width="18" height="17"><path d="M0 0h5v17H0ZM13 0h5v17h-5Z" fill="#474b52" /></svg>
      <Gap $w={14} />
      <RecBtn>REC</RecBtn>
      <Gap $w={11} />
      <svg width="24" height="20" viewBox="0 0 24 20"><path d="M1 4h6l2-3h7l2 3h5v15H1Z" fill="#fff" /><circle cx="12" cy="11" r="5" fill="none" stroke="#272d36" strokeWidth="2" /><path d="M19 6h2" stroke="#272d36" strokeWidth="1.500" /></svg>
    </RecRow>
    <RecFoot><Marquee width="18" height="18"><path d="M0 1h18M0 17h18M1 0v18M17 0v18" stroke="#e4e6e8" strokeWidth="2" strokeDasharray="2.500 1.400" /></Marquee>1920x1080 - (0, 0), (1920, 1080) - Display 1<Gap /><svg width="15" height="9"><path d="m1 1 6.500 6L14 1" stroke="#9ba1a8" strokeWidth="2.500" fill="none" /></svg></RecFoot>
  </Recorder>
);

const ChromeIcon = ({ c }) => (
  <svg width="37" height="40" viewBox="0 0 40 40" preserveAspectRatio="none"><circle cx="20" cy="20" r="19" fill={c[0]} /><path d="M20 20 3.500 10.500A19 19 0 0 0 18 39l8-14Z" fill={c[1]} /><path d="M20 11h17a19 19 0 0 1-19 28l9-15Z" fill={c[2]} /><circle cx="20" cy="20" r="9" fill="#fff" /><circle cx="20" cy="20" r="7" fill={c[3]} /></svg>
);

const Tasks = () => (
  <Taskbar>
    <Task $w={66}><svg width="46" height="46" viewBox="0 0 46 46"><circle cx="23" cy="23" r="21.500" fill="url(#orb)" stroke="#9cb4c8" /><path d="M12 14q5-4 10-1l-2 9q-5-3-10 1Z" fill="#f0602a" /><path d="M24 13q6 3 11-1l-3 10q-5 3-10 1Z" fill="#8cc63e" /><path d="M10 24q5-3 10-1l-3 10q-5-3-9 0Z" fill="#4aa8e8" /><path d="M22 25q5 2 9-1l-3 9q-4 3-9 1Z" fill="#fcc830" /></svg></Task>
    <Task $w={78}><svg width="42" height="42" viewBox="0 0 42 42"><path d="M20 5c9 0 16 7 16 17H15q0 7 7 7 4 0 6-3h7q-4 11-15 11C11 37 5 30 5 21S11 5 20 5Zm6 12q-1-6-6-6t-5 6Z" fill="#2c8ad8" stroke="#145aa0" /><path d="M4 39Q-2 30 12 15T40 3q-2-2-10 2T9 22 4 39Z" fill="#f2bc2c" /></svg></Task>
    <Task $w={62}><ChromeIcon c={["#d8453a", "#1da05a", "#fcca3e", "#4a8af4"]} /></Task>
    <Task $w={73}><svg width="34" height="38" viewBox="0 0 34 38"><path d="M10 2h22v32l-6 2H10Z" fill="#4a94bc" stroke="#a0d4ee" /><rect x="2" y="3" width="25" height="32" fill="#7fbcdc" stroke="#cfe8f4" /><circle cx="14" cy="19" r="10.500" fill="#f47a20" /><path d="m10 12 10 7-10 7Z" fill="#fff" /></svg></Task>
    <Task $w={72}><svg width="38" height="38"><rect width="38" height="38" rx="1" fill="#fbd916" /><circle cx="19" cy="15" r="9" fill="#fff" /><path d="m16 10 8 5-8 5Z" fill="#e8c410" /><text x="7" y="34" fontSize="8" fontWeight="700" fill="#222" fontFamily="Liberation Sans" textLength="25">Player</text></svg></Task>
    <Task $on style={{ marginLeft: 1 }}><svg width="42" height="40" viewBox="0 0 42 40"><path d="M3 6 9 2h7l3 3h12l8 3v27H3Z" fill="#f0d878" stroke="#c8a848" /><path d="M7 3h8M18 5h8M27 7h7" stroke="#fff" strokeWidth="3" /><path d="M12 2v3M20 4v3" stroke="#3a9a48" strokeWidth="2" /><path d="M3 12h36v24H3Z" fill="#fbe9a0" stroke="#d8bc60" /><path d="M7 38V24h28v14h-7v-6H14v6Z" fill="#8ccbe8" stroke="#4a98c0" /></svg></Task>
    <Task $w={70}><ChromeIcon c={["#4a7fd8", "#a9c4f6", "#7fa6ee", "#3f74d0"]} /></Task>
    <Task $w={68}><svg width="39" height="42" viewBox="0 0 40 40" preserveAspectRatio="none"><path d="M24 0q3 7 9 10 5 6 5 13A17 17 0 0 1 3 22q0-8 4-12l3 4 5-1q4-10 9-13Z" fill="url(#fox)" /><circle cx="20" cy="22" r="8" fill="#6a3ad0" /><path d="M5 12q8 0 14 4-8 0-9 6t8 9Q6 32 5 20Z" fill="#ff7a20" /></svg></Task>
    <Task $w={72}><svg width="36" height="30" viewBox="0 0 36 32"><path d="M35 0v32L17 16Z" fill="#cbb9f6" /><path d="M1 0v32l24-16Z" fill="#6426d0" /></svg></Task>
    <Task $on><svg width="38" height="42" viewBox="0 0 38 42"><ellipse cx="19" cy="21" rx="18" ry="19.500" fill="#fff" stroke="#555" /><ellipse cx="19" cy="21" rx="15.500" ry="17" fill="#000" /><ellipse cx="19" cy="21" rx="10" ry="11" fill="#ea2424" /></svg></Task>
    <Task $on $dim><Diamond s={41} /></Task>
    <Tray>
      <Lang>EN</Lang><Gap $w={22} />
      <svg width="10" height="6"><path d="M0 6 5 0l5 6Z" fill="#fff" /></svg><Gap $w={19} />
      <svg width="20" height="20"><rect x=".5" y=".5" width="19" height="19" rx="2" fill="#1fc91f" stroke="#7af07a" /><path d="M3 7l4-4v2.500h9v3H7V11ZM17 13l-4 4v-2.500H4v-3h9V9Z" fill="#fff" /></svg><Gap $w={11} />
      <svg width="19" height="20" fill="none" stroke="#fff" strokeWidth="1.500"><path d="M1 4h9v14H1ZM4 4V1.500h4V4" /><path d="M3 7h5v9H3Z" fill="#fff" stroke="none" /><path d="M12 3v4M17 3v4M11 8h7v3h-7ZM14.500 11v8" /></svg><Gap $w={13} />
      <svg width="16" height="16" fill="#fff"><path d="M0 12h2v3H0ZM3 10h2v5H3ZM6 7h2v8H6ZM9 5h2v10H9ZM12 1h2v14h-2Z" /></svg><Gap $w={13} />
      <svg width="20" height="20" viewBox="0 0 20 20"><path d="M1 6h3l5-5v18l-5-5H1Z" fill="#fff" /><path d="M11 7q2 3 0 6M14 5q3 5 0 10M17 4q4 6 0 12" stroke="#fff" fill="none" /></svg><Gap $w={5} />
      <DateBox>3:24 AM<br />11/26/2021</DateBox>
      <ShowDesk />
    </Tray>
  </Taskbar>
);

const DialogWindow = () => (
  <Dialog>
    <DlgTitle>
      <DlgArt width="1370" height="34" viewBox="139 55 1370 34">
        <g filter="url(#soft)" opacity=".75">
          <path d="m210 68 7 9-4 16h-12Z" fill="#e8d898" /><path d="m240 72 22 20" stroke="#8a8a8a" strokeWidth="5" /><path d="M278 72h14v20h-14Z" fill="#f09030" /><path d="m294 76 8 14" stroke="#a06040" strokeWidth="4" /><path d="M326 88q4-12 22-6v12h-20Z" fill="#68b848" /><path d="M376 80h18v12h-18Z" fill="#a0a4a4" /><path d="M418 72h7v8h8v-8h7v24h-22Z" fill="#3a5488" /><path d="m462 92 20-20" stroke="#c8a048" strokeWidth="6" /><circle cx="516" cy="84" r="15" fill="#85898a" /><path d="m552 71 24 14-24 14Z" fill="#3a9a2a" /><path d="m592 82 16-12 16 12v12h-30Z" fill="#ecb04a" /><path d="M645 82q14-12 26 0l-8 12Z" fill="#e89838" /><path d="m664 84 10-12" stroke="#222" strokeWidth="5" /><path d="m700 72 14 12-6 10h-18Z" fill="#7c8084" /><path d="M734 72h14v20h-14Z" fill="#e4dca8" /><path d="M752 74h8v16h-8Z" fill="#d04838" /><path d="M776 72h12v20h-12Z" fill="#e4dca8" /><circle cx="797" cy="82" r="8" fill="#f0d020" /><circle cx="831" cy="86" r="16" fill="#5c8cb4" />
        </g>
      </DlgArt>
      <DlgName><Diamond />Outcome</DlgName>
      <DlgClose><svg width="15" height="13" viewBox="0 0 15 13"><path d="M1 .5h4L7.500 4 10 .5h4L9.800 6.500 14 12.500h-4L7.500 9 5 12.500H1l4.200-6Z" fill="#fff" stroke="#555b62" /></svg></DlgClose>
    </DlgTitle>
    <DlgBody>
      <DlgTools>
        <svg width="25" height="26" viewBox="0 0 26 26"><ChaidArt /></svg>
        <ToolFrame>
          <DlgMenu>
            <svg width="16" height="18" viewBox="0 0 16 18"><path d="M5 5V2q3-3 5 0v3" fill="none" stroke="#7a4a2a" /><path d="m1 5 5 1 9-1v11l-9 1-5-2Z" fill="#b9693a" /><path d="m1 5 5 1v11l-5-2Z" fill="#e0b080" /></svg>
            <span><U>F</U>ile</span><Gap $w={14} />
            <svg width="16" height="18" viewBox="0 0 16 18"><path d="m8 3 6 5-2 8H6L3 9Z" fill="#f4f4ff" stroke="#3a3a8a" /><path d="M3.500 0v8M0 4h8M1 1l6 6M7 1 1 7" stroke="#d8c010" strokeWidth="1.300" /></svg>
            <span><U>G</U>enerate</span>
          </DlgMenu>
          <Btn $w={86} $h={30}><svg width="16" height="16" viewBox="0 0 16 16"><path d="M.5.500h15v15H.5Z" fill="#fff" stroke="#4a78a8" strokeDasharray="2 1" /><path d="M5 1v14M11 1v14M1 5h14M1 10h14" stroke="#8ab0d0" /><path d="m3 1 9 7-9 7Z" fill="#178a1c" stroke="#0a4a10" /></svg><span><U>P</U>review</span></Btn>
          <Gap $w={8} />
          <Btn $w={30} $h={26}><svg width="18" height="16" viewBox="0 0 18 16"><rect x="5" y=".5" width="11" height="9" fill="#eef4fa" stroke="#3a689a" /><path d="M1 5h16v10.500H1Z" fill="#d9c060" stroke="#7a6418" /><path d="M7 2h6v5H7Z" fill="#8ab4dc" /><path d="M6 7v8M2 11h8" stroke="#0f7a1a" strokeWidth="3" /><path d="M6 8v6M3 11h6" stroke="#6cf06c" /></svg></Btn>
          <Gap />
          <Btn $w={30} $h={26}><svg width="16" height="16"><circle cx="8" cy="8" r="7" fill="#5c14a0" stroke="#3a0a6c" /><text x="5" y="12" fontSize="11" fontWeight="700" fill="#fff" fontFamily="Liberation Sans">?</text></svg></Btn><Gap $w={1} />
          <Btn $w={30} $h={26}><svg width="16" height="16"><path d="M3.500 8.500h9v5h-9Z" fill="#fff" stroke="#1f4478" /><path d="M3 8.500h10" stroke="#1f4478" strokeWidth="2" /></svg></Btn>
          <Btn $w={30} $h={26}><svg width="18" height="16"><path d="M1.500.500h15v15h-15Z" fill="#fff" stroke="#1f4478" /><path d="M1 2h16" stroke="#1f4478" strokeWidth="4" /></svg></Btn>
        </ToolFrame>
      </DlgTools>
      <DlgTabs>
        <Strip $h={45} $pl={6} $from="#e3effb"><Tab $w={46} $h={36} $on>Model</Tab><Tab $w={61}>Settings</Tab><Tab $w={84}>Annotations</Tab></Strip>
        <BlueBar $h={5} />
      </DlgTabs>
      <ScoreBar><span><U>S</U>core new data using:</span><Select><span>Ensemble</span><svg width="9" height="6"><path d="M0 0h9L4.500 6Z" fill="#5a5f68" /></svg></Select></ScoreBar>
      <Work>
        <ThumbPane>
          <ThumbList>{cards.map((c, i) => <ThumbCard key={i} $on={i === 1}>{c}</ThumbCard>)}</ThumbList>
          <VBar><Arrow><Tri d="up" /></Arrow><Thumb $f={504} /><Track $v $f={104} /><Arrow><Tri d="down" /></Arrow></VBar>
        </ThumbPane>
        <PaneSplit><svg width="4" height="14" fill="#2a5898"><circle cx="2" cy="2" r="1.500" /><circle cx="2" cy="7" r="1.500" /><circle cx="2" cy="12" r="1.500" /></svg></PaneSplit>
        <ChartArea><Chart /></ChartArea>
      </Work>
      <DlgFooter><Btn $w={57} $h={28} $dark>OK</Btn><Btn $w={58} $h={28}>Cancel</Btn><Gap /><Btn $w={58} $h={28} /><Btn $w={58} $h={28} /></DlgFooter>
    </DlgBody>
  </Dialog>
);

const menus = [["F", "ile"], ["E", "dit"], ["I", "nsert"], ["V", "iew"], ["T", "ools"], ["S", "uperNode"], ["E", "xtensions"], ["W", "indow"], ["H", "elp"]];
const phases = ["Business Understanding", "Data Understanding", "Data Preparation", "Modeling", "Evaluation", "Deployment"];

export default function App() {
  return (
    <Desktop>
      <Global />
      <SharedDefs />
      <MainWindow>
        <TitleBar>
          <TitleArt width="1910" height="33" viewBox="0 2 1910 33">
            <g filter="url(#soft)">
              <path d="M10 2h280v24H10Z" fill="#c9c8e6" opacity=".45" />
              <path d="m30 34 10-12 10 12ZM58 22l14 12H40Z" fill="#3a50c8" /><path d="M20 28h14l-6 8Z" fill="#fff" /><path d="M120 30h50v8h-50Z" fill="#a8bce0" /><circle cx="238" cy="36" r="27" fill="#e6dfe8" /><path d="m228 36 8-14 12 14Z" fill="#e04848" /><circle cx="337" cy="38" r="24" fill="#2c78a8" /><path d="M310 34q14-22 54-24" stroke="#d8b440" strokeWidth="5" fill="none" /><path d="M320 36q6-14 26-14" stroke="#d8c470" strokeWidth="7" fill="none" /><path d="m408 36 16-22 10 22Zm28-10h16v10h-16Z" fill="#a02838" /><circle cx="524" cy="38" r="30" fill="#8cb8dc" /><path d="M590 9h40v28h-40Z" fill="#d8cc90" /><path d="M598 9h8v28h-8Z" fill="#f0e8b8" />
              <path d="M1128 0h80l46 35h-90ZM1270 0h60l30 35h-60Z" fill="#8486a8" opacity=".25" />
            </g>
          </TitleArt>
          <TitleText><Diamond /><span>Stream_final* - IBM® SPSS® Modeler</span></TitleText>
          <Caption>
            <CaptionBtn $w={36}><svg width="16" height="20"><path d="M0 14h16v3H0Z" fill="#fff" /></svg></CaptionBtn>
            <CaptionBtn $w={33}><svg width="17" height="13"><path d="M2 2h13v9H2Z" fill="none" stroke="#fff" strokeWidth="3.500" /></svg></CaptionBtn>
            <CaptionBtn $w={59}><svg width="14" height="13"><path d="m1.500 1 11 11M12.500 1l-11 11" stroke="#fff" strokeWidth="3.200" /></svg></CaptionBtn>
          </Caption>
        </TitleBar>
        <Client>
          <MenuBar>{menus.map(([a, b]) => <span key={a + b}><U>{a}</U>{b}</span>)}</MenuBar>
          <Body>
            <StreamArea>
              <Toolbar>
                <svg width="28" height="32" viewBox="0 0 28 32"><path d="M1 1h18l8 8v22H1Z" fill="#f6f6f4" stroke="#777" /><path d="M2 2h16v6H2Z" fill="#3f8ed8" /><path d="M19 1v8h8Z" fill="#b8bcc0" /><path d="M6 12h14M6 16h16M6 20h16M6 24h16" stroke="#aaa" strokeWidth="1.500" /></svg>
                <svg width="33" height="30" viewBox="0 0 33 30"><path d="M3 2h9l2 3h14v8H3Z" fill="#fdc850" stroke="#d87a10" /><path d="M5 7h22v6H5Z" fill="#fff8dc" stroke="#e89a30" /><path d="M1 12h15l3-3h13l-3 20H4Z" fill="url(#foldFront)" stroke="#e07a10" /></svg>
                <svg width="27" height="29" viewBox="0 0 28 29"><path d="M1 1h26v27H5l-4-4Z" fill="#5590cc" /><path d="M5 1h18v13H5Z" fill="#e8f1f8" /><path d="M5 11h18v3H5Z" fill="#e8204a" /><path d="M8 4h12M8 7h12" stroke="#9ab" /><path d="M7 18h14v10H7Z" fill="#dfe6ec" /><path d="M10 20h4v7h-4Z" fill="#3a74b0" /></svg>
              </Toolbar>
              <CanvasRow>
                <Canvas>
                  <Node $x={19} $y={240}><FieldsIcon /><NodeLabel $m={-2} $ls={0.4} $pl={8}>Fields</NodeLabel></Node>
                  <Node $x={14} $y={345}><TypeIcon /><NodeLabel $m={1} $ls={0.4} $pl={9}>Type</NodeLabel></Node>
                  <Node $x={128} $y={345}><StarIcon /><NodeLabel $m={1} $ls={0.45}>Outlier and Missing</NodeLabel></Node>
                  <Node $x={1579} $y={285}><AnalysisIcon /><NodeLabel>Analysis</NodeLabel></Node>
                  <Node $x={1567} $y={390}><AnalysisIcon /><NodeLabel>Analysis</NodeLabel></Node>
                  <Node $x={1567} $y={515}><GemIcon /><NodeLabel $m={-2}>Outcome</NodeLabel></Node>
                  <Node $x={1543} $y={705}><AnalysisIcon /><NodeLabel>Analysis</NodeLabel></Node>
                  <Links width="1631" height="721" viewBox="11 110 1631 721">
                    <g stroke="#0a66d4" strokeWidth="3"><path d="M19.500 342V297M49 372H96M1567.500 507V447" /></g>
                    <g fill="#0a66d4"><path d="m19.500 299 6 17h-12ZM97 372l-19 6v-11ZM1567.500 448l6 18h-12ZM1549 317l-19-2 3 11ZM1538 531l-19-10v10Z" /></g>
                    <path d="m1532 499 15 16" stroke="#0a66d4" strokeWidth="2" strokeDasharray="5 4" />
                    <circle cx="1526.500" cy="491" r="4.500" fill="#ffe61c" stroke="#f09a30" strokeWidth="3" strokeDasharray="1.500 1" />
                  </Links>
                </Canvas>
                <VBar><Arrow><Tri d="up" /></Arrow><Track $white $f={39} /><Thumb $f={473} /><Track $v $f={179} /><Arrow><Tri d="down" /></Arrow></VBar>
              </CanvasRow>
              <HBar $mr={15} $ml={2}><Arrow $h><Tri d="left" /></Arrow><Track $f={700} /><Thumb $h $f={900} /><Arrow $h><Tri d="right" /></Arrow></HBar>
            </StreamArea>
            <VSplit><Tri d="left" s={7} /><Gap $w={5} style={{ height: 5 }} /><Tri d="right" s={7} /><Gap /><svg width="5" height="14" fill="#2a5898"><circle cx="2.500" cy="2" r="1.500" /><circle cx="2.500" cy="7" r="1.500" /><circle cx="2.500" cy="12" r="1.500" /></svg><Gap $w={5} style={{ height: 382 }} /></VSplit>
            <Side>
              <SidePanel $h={387}>
                <Strip $h={38} $pl={6}><Tab $w={64}>Streams</Tab><Tab $w={60}>Outputs</Tab><Tab $w={53} $h={36} $on>Models</Tab></Strip>
                <SideBody>
                  <ModelItem>
                    <svg width="42" height="40" viewBox="0 0 42 40"><g transform="translate(4 0) scale(.78 .74)"><Gem /></g><g transform="translate(0 8) scale(.82)"><ChaidArt /></g></svg>
                    <div>Outcome</div>
                  </ModelItem>
                  <HBar><Arrow $h><Tri d="left" /></Arrow><Track $f={1} /><Arrow $h><Tri d="right" /></Arrow></HBar>
                </SideBody>
              </SidePanel>
              <SideSplit><Tri d="up" s={7} /><Tri d="down" s={7} /><Gap $w={90} /><svg width="14" height="4" fill="#2a5898"><circle cx="2" cy="2" r="1.500" /><circle cx="7" cy="2" r="1.500" /><circle cx="12" cy="2" r="1.500" /></svg></SideSplit>
              <SidePanel $h={389}>
                <Strip $h={38} $pl={6}><Tab $w={80} $h={36} $on>CRISP-DM</Tab><Tab $w={62}>Classes</Tab></Strip>
                <SideBody>
                  <Tree>
                    <TreeRow $root><Expander /><Folder />(unsaved project)</TreeRow>
                    {phases.map((p, i) => <TreeRow key={p} $bold={i === 0}><Guide $last={i === 5} /><Folder />{p}</TreeRow>)}
                  </Tree>
                </SideBody>
              </SidePanel>
            </Side>
          </Body>
          <HSplit><Tri d="up" s={7} /><Tri d="down" s={7} /></HSplit>
          <Lower>
            <Strip $h={40} $pl={7} $from="#e8f1fb">
              <Tab $w={83} $h={35} $on><svg width="12" height="15" viewBox="0 0 12 15"><circle cx="6" cy="4" r="3.500" fill="#e8a860" stroke="#a85a20" /><path d="M1 14q0-6 5-6t5 6Z" fill="#f07a28" stroke="#b04a10" /></svg>Favorites</Tab>
              <Tab $w={82}><svg width="13" height="13"><circle cx="6.500" cy="6.500" r="6" fill="#0e7ec2" /></svg>Sources</Tab>
            </Strip>
            <BlueBar $h={4} />
            <Palette>
              <PaletteItems>
                {palette.map((p, i) => p === 0 ? <Sep key={i} /> : <PaletteItem key={i} $w={p[0]}><PalIcon shape={p[2]}>{p[3]}</PalIcon><div>{p[1]}</div></PaletteItem>)}
              </PaletteItems>
              <HBar $h={15}><Arrow $h><Tri d="left" /></Arrow><Track $f={1} /></HBar>
            </Palette>
          </Lower>
          <StatusBar><ServerBtn><svg width="9" height="14"><path d="M1 1h7v12H1Z" fill="#fff" stroke="#222" /><path d="M3 4h3M3 6h3M3 8h3" stroke="#999" /></svg>Server: Local Server</ServerBtn><StatusRest /></StatusBar>
        </Client>
        <TopTab width="600" height="34" viewBox="660 0 600 34">
          <path d="M660 0q60 3 120 13 90 17 180 17t180-17q60-10 120-13Z" fill="#1c1c20" opacity=".4" /><path d="M668 0q60 2 115 12 90 15 177 15t172-15q60-10 123-12Z" fill="#1c1c1f" /><path d="M945 8h6v6q-5-1-6-6ZM955 8h10v6q-2 4-5 4t-5-4ZM969 8h6q-1 5-6 6Z" fill="#1fae1f" />
        </TopTab>
      </MainWindow>
      <Tasks />
      <DialogShadow />
      <DialogWindow />
      <RecorderPanel />
      <Tip>Capture Image</Tip>
    </Desktop>
  );
}
